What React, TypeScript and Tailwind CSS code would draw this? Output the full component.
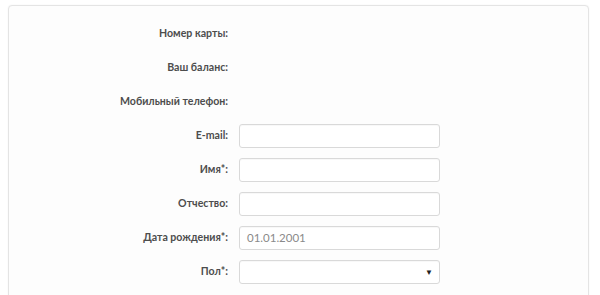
import React from "react";

const rows: { label: string; kind: "none" | "input" | "select"; value?: string }[] = [
  { label: "Номер карты:", kind: "none" },
  { label: "Ваш баланс:", kind: "none" },
  { label: "Мобильный телефон:", kind: "none" },
  { label: "E-mail:", kind: "input" },
  { label: "Имя*:", kind: "input" },
  { label: "Отчество:", kind: "input" },
  { label: "Дата рождения*:", kind: "input", value: "01.01.2001" },
  { label: "Пол*:", kind: "select" },
];

export default function App() {
  return (
    <div className="w-[600px] h-[295px] bg-white overflow-hidden pt-[5px] pl-[8px]" style={{ fontFamily: 'Lato, "Open Sans", sans-serif' }}>
      <div className="w-[581px] h-[320px] bg-[#fdfdfd] border border-[#e4e4e4] rounded-[4px] shadow-[0_0_2px_rgba(0,0,0,0.06)] pt-[16px] flex flex-col gap-[10px]">
        {rows.map((r) => (
          <div key={r.label} className="flex items-center h-[24px]">
            <div className="w-[219px] text-right text-[10.6px] font-bold text-[#4d4d4d]">{r.label}</div>
            {r.kind !== "none" && (
              <div className="ml-[11px] w-[201px] h-[24px] border border-[#d9d9d9] rounded-[3px] bg-white flex items-center px-[7px] text-[11.5px] text-[#8a8a8a] shadow-[inset_0_1px_1px_rgba(0,0,0,0.03)]">
                <span className="flex-1">{r.value ?? ""}</span>
                {r.kind === "select" && <span className="text-[8px] text-[#222] mr-[-1px]">▼</span>}
              </div>
            )}
          </div>
        ))}
      </div>
    </div>
  );
}
